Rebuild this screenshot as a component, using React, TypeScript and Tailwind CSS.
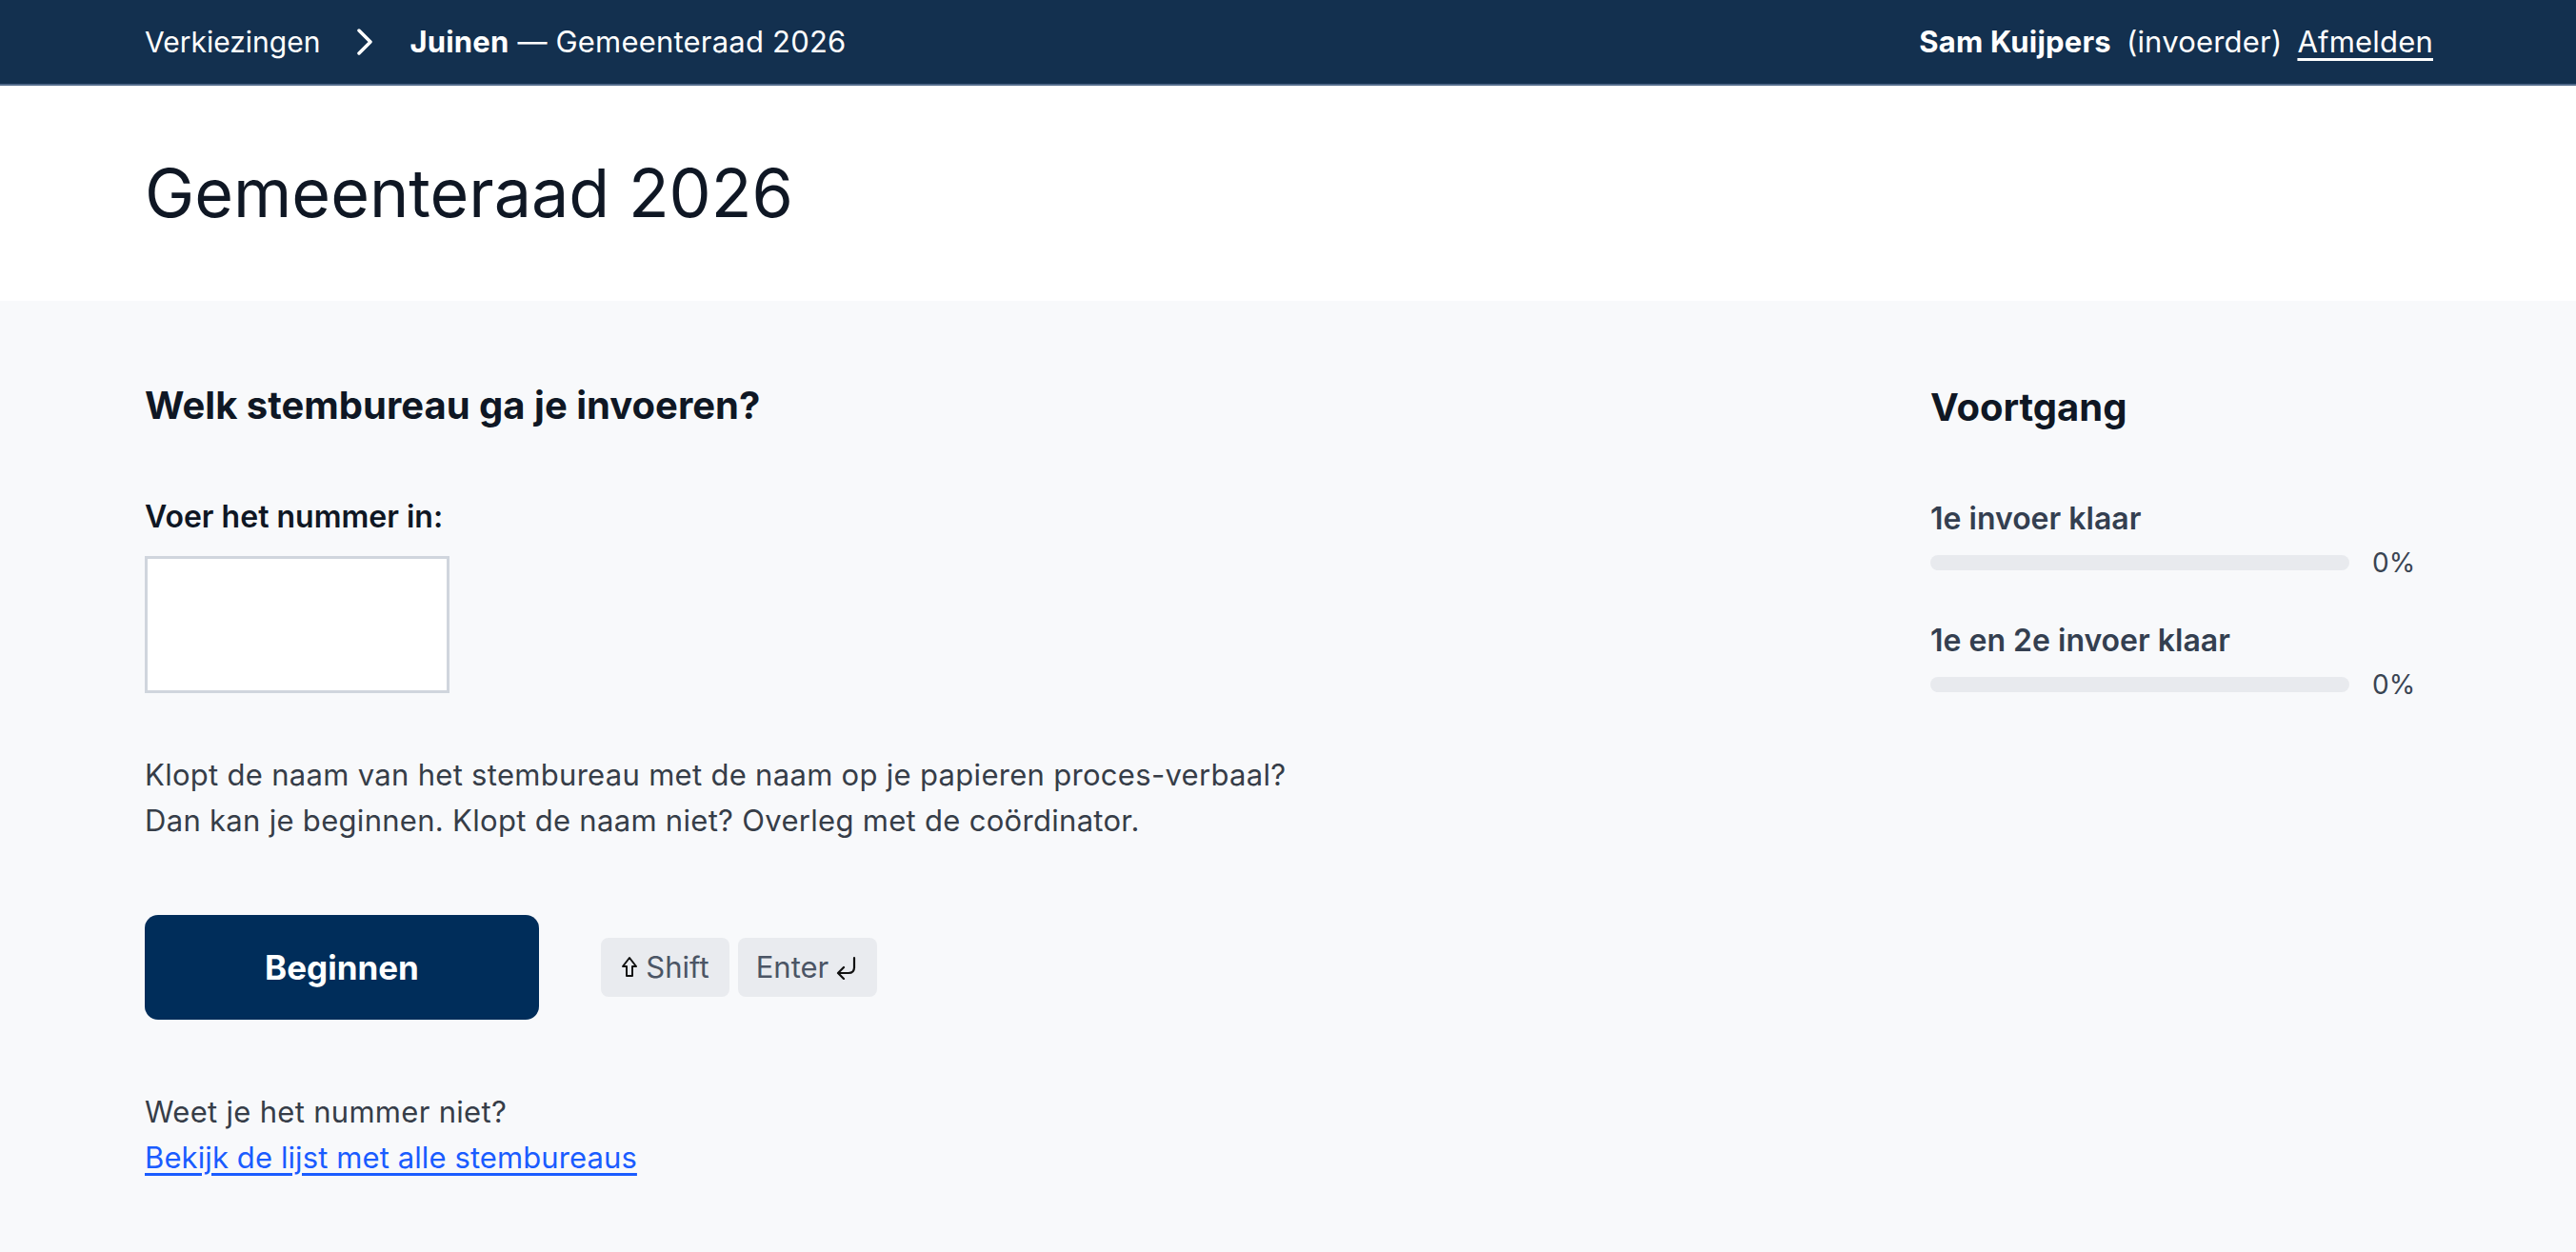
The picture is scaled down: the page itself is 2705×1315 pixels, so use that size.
import React from "react";

const font = { fontFamily: "Inter, 'Noto Sans', sans-serif" };

function Chevron() {
  return (
    <svg width="18" height="28" viewBox="0 0 18 28" fill="none" className="ml-[38px] mr-[38px]">
      <polyline points="3,2 15,14 3,26" stroke="white" strokeWidth="3.5" strokeLinecap="round" strokeLinejoin="round" />
    </svg>
  );
}

function ShiftIcon() {
  return (
    <svg width="18" height="24" viewBox="0 0 18 24" fill="none">
      <path d="M9 2 L16 11 H12 V21 H6 V11 H2 Z" stroke="#111" strokeWidth="2" strokeLinejoin="round" />
    </svg>
  );
}

function EnterIcon() {
  return (
    <svg width="26" height="26" viewBox="0 0 26 26" fill="none">
      <path d="M21 3 V13 Q21 19 15 19 H5" stroke="#111" strokeWidth="2.2" strokeLinecap="round" fill="none" />
      <path d="M10 13 L4 19 L10 25" stroke="#111" strokeWidth="2.2" strokeLinecap="round" strokeLinejoin="round" fill="none" />
    </svg>
  );
}

function Progress({ label, first }: { label: string; first?: boolean }) {
  return (
    <div>
      <div className={`${first ? "mt-[69px]" : "mt-[42px]"} text-[32px] leading-[48px] font-semibold text-[#343f50]`}>{label}</div>
      <div className="mt-[6px] flex h-[32px] items-center">
        <div className="h-[16px] w-[440px] rounded-full bg-[#e8eaee]" />
        <span className="ml-[24px] text-[28px] text-[#3a4452]">0%</span>
      </div>
    </div>
  );
}

export default function App() {
  return (
    <div className="min-h-screen bg-[#f8f9fb]" style={font}>
      <header className="flex h-[90px] items-center justify-between border-b-2 border-[#51698a] bg-[#13304f] pl-[152px] pr-[150px] text-white">
        <div className="flex items-center">
          <span className="text-[30px]">Verkiezingen</span>
          <Chevron />
          <span className="text-[31px] tracking-[0.2px]">
            <span className="font-bold">Juinen</span>
            <span>&nbsp;— Gemeenteraad 2026</span>
          </span>
        </div>
        <div className="flex items-center text-[31px] tracking-[0.2px]">
          <span className="font-bold">Sam Kuijpers</span>
          <span className="ml-[16px]">(invoerder)</span>
          <a className="ml-[16px] underline underline-offset-[6px]" href="#">Afmelden</a>
        </div>
      </header>

      <section className="flex h-[226px] items-center bg-white px-[152px]">
        <h1 className="text-[70px] font-normal leading-none text-[#0f1724]">Gemeenteraad 2026</h1>
      </section>

      <main className="flex justify-between pl-[152px] pr-[150px]">
        <div className="flex flex-col items-start">
          <h2 className="mt-[86px] text-[40px] font-bold leading-[48px] text-[#0f1724]">Welk stembureau ga je invoeren?</h2>
          <label className="mt-[69px] text-[32px] font-semibold leading-[48px] text-[#0f1724]">Voer het nummer in:</label>
          <input className="mt-[17px] h-[144px] w-[320px] border-[3px] border-[#d0d5dd] bg-white outline-none" />
          <p className="mt-[62px] text-[31px] leading-[48px] tracking-[0.3px] text-[#363d48]">
            Klopt de naam van het stembureau met de naam op je papieren proces-verbaal?
            <br />
            Dan kan je beginnen. Klopt de naam niet? Overleg met de coördinator.
          </p>
          <div className="mt-[75px] flex items-center">
            <button className="h-[110px] w-[414px] rounded-[14px] bg-[#002d5a] text-[35px] font-bold text-white">Beginnen</button>
            <div className="ml-[65px] flex items-center gap-[9px] text-[31px] text-[#4b5565]">
              <span className="flex h-[62px] w-[135px] items-center justify-center gap-[8px] rounded-[8px] bg-[#e9ebef]">
                <ShiftIcon />
                Shift
              </span>
              <span className="flex h-[62px] w-[146px] items-center justify-center gap-[6px] rounded-[8px] bg-[#e9ebef]">
                Enter
                <EnterIcon />
              </span>
            </div>
          </div>
          <p className="mt-[73px] text-[31px] leading-[48px] tracking-[0.3px] text-[#363d48]">Weet je het nummer niet?</p>
          <a href="#" className="text-[31px] leading-[48px] tracking-[0.1px] text-[#1a5cff] underline underline-offset-[5px]">
            Bekijk de lijst met alle stembureaus
          </a>
        </div>

        <aside className="w-[528px]">
          <h2 className="mt-[88px] text-[40px] font-bold leading-[48px] text-[#0f1724]">Voortgang</h2>
          <Progress label="1e invoer klaar" first />
          <Progress label="1e en 2e invoer klaar" />
        </aside>
      </main>
    </div>
  );
}
